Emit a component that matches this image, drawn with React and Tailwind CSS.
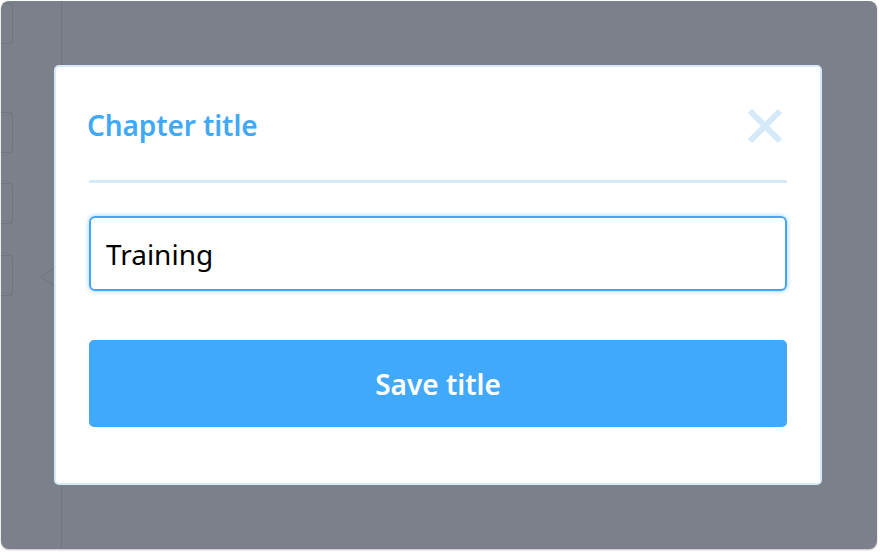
import React, { useState } from "react";

function CloseIcon() {
  return (
    <svg width="36" height="36" viewBox="0 0 36 36" fill="none">
      <path d="M3 3L33 33M33 3L3 33" stroke="#d5e9f9" strokeWidth="6" />
    </svg>
  );
}

function Sidebar() {
  return (
    <div className="relative w-[61px] shrink-0 h-full border-r border-[#70757f]">
      <div className="flex flex-col">
        <div className="mt-[2px] h-[41px] w-[12px] rounded-r-[4px] border border-l-0 border-[#70757f]" />
        <div className="mt-[68px] h-[41px] w-[12px] rounded-r-[4px] border border-l-0 border-[#70757f]" />
        <div className="mt-[30px] h-[41px] w-[12px] rounded-r-[4px] border border-l-0 border-[#70757f]" />
        <div className="mt-[31px] h-[41px] w-[12px] rounded-r-[4px] border border-l-0 border-[#70757f]" />
      </div>
      {/* tooltip arrow behind overlay */}
      <svg className="absolute left-[39px] top-[261px]" width="22" height="30" viewBox="0 0 22 30" fill="none">
        <path d="M22 1L1 15L22 29" stroke="#70757f" strokeWidth="1" />
      </svg>
    </div>
  );
}

function ChapterTitleModal() {
  const [title, setTitle] = useState("Training");

  return (
    <div className="absolute left-[53px] top-[64px] w-[768px] h-[420px] bg-white rounded-[5px] border-2 border-[#d5e9f9] px-[33px] pt-[39px] font-['Noto_Sans',sans-serif]">
      {/* Header */}
      <div className="flex items-center justify-between h-[40px]">
        <h2 className="-ml-[2px] -mt-[3px] text-[28px] font-semibold text-[#3fa9f5] tracking-[-0.1px]">Chapter title</h2>
        <button className="mr-[4px]">
          <CloseIcon />
        </button>
      </div>
      <div className="mt-[34px] h-[3px] bg-[#d5e9f9]" />

      {/* Input */}
      <input
        value={title}
        onChange={(e) => setTitle(e.target.value)}
        className="mt-[33px] w-full h-[75px] rounded-[6px] border-2 border-[#42a6f6] px-[15px] text-[28px] text-black outline-none shadow-[0_0_5px_rgba(66,166,246,0.55)]"
      />

      {/* Save button */}
      <button className="mt-[49px] w-full h-[87px] rounded-[5px] bg-[#40a9fc] text-white text-[28px] font-semibold">
        Save title
      </button>
    </div>
  );
}

export default function App() {
  return (
    <div className="w-[880px] h-[552px] bg-white p-[1px] pr-[3px] pb-[3px]">
      <div className="relative w-full h-full rounded-[8px] bg-[#7b808a] overflow-hidden shadow-[0_1px_2px_rgba(0,0,0,0.25)] flex">
        <Sidebar />
        <div className="flex-1" />
        <ChapterTitleModal />
      </div>
    </div>
  );
}
